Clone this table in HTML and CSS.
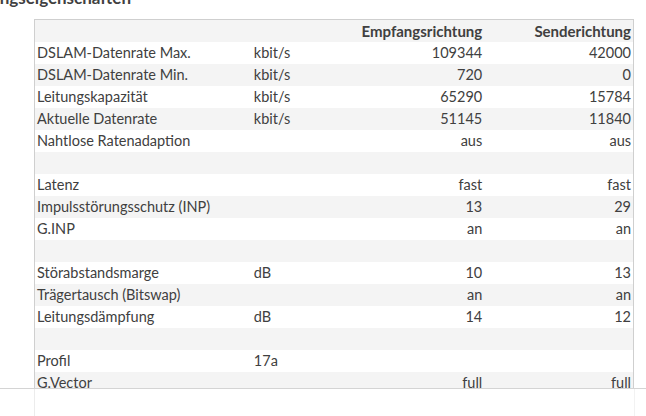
FILE: index.html
```html
<!DOCTYPE html>
<html lang="de">
<head>
<meta charset="utf-8">
<title>Leitungseigenschaften</title>
<link rel="stylesheet" href="styles.css">
</head>
<body>
<div class="viewport">
  <h2 class="title">Leitungseigenschaften</h2>
  <table class="props">
    <colgroup>
      <col class="c-label"><col class="c-unit"><col class="c-rx"><col class="c-tx">
    </colgroup>
    <thead>
      <tr><th></th><th></th><th class="num">Empfangsrichtung</th><th class="num">Senderichtung</th></tr>
    </thead>
    <tbody>
      <tr><td>DSLAM-Datenrate Max.</td><td>kbit/s</td><td class="num">109344</td><td class="num">42000</td></tr>
      <tr><td>DSLAM-Datenrate Min.</td><td>kbit/s</td><td class="num">720</td><td class="num">0</td></tr>
      <tr><td>Leitungskapazität</td><td>kbit/s</td><td class="num">65290</td><td class="num">15784</td></tr>
      <tr><td>Aktuelle Datenrate</td><td>kbit/s</td><td class="num">51145</td><td class="num">11840</td></tr>
      <tr><td>Nahtlose Ratenadaption</td><td></td><td class="num">aus</td><td class="num">aus</td></tr>
      <tr><td></td><td></td><td></td><td></td></tr>
      <tr><td>Latenz</td><td></td><td class="num">fast</td><td class="num">fast</td></tr>
      <tr><td>Impulsstörungsschutz (INP)</td><td></td><td class="num">13</td><td class="num">29</td></tr>
      <tr><td>G.INP</td><td></td><td class="num">an</td><td class="num">an</td></tr>
      <tr><td></td><td></td><td></td><td></td></tr>
      <tr><td>Störabstandsmarge</td><td>dB</td><td class="num">10</td><td class="num">13</td></tr>
      <tr><td>Trägertausch (Bitswap)</td><td></td><td class="num">an</td><td class="num">an</td></tr>
      <tr><td>Leitungsdämpfung</td><td>dB</td><td class="num">14</td><td class="num">12</td></tr>
      <tr><td></td><td></td><td></td><td></td></tr>
      <tr><td>Profil</td><td>17a</td><td></td><td></td></tr>
      <tr><td>G.Vector</td><td></td><td class="num">full</td><td class="num">full</td></tr>
    </tbody>
  </table>
</div>
<div class="footer"><div class="footer-rail"></div></div>
</body>
</html>
```
FILE: styles.css
```css
html, body {
  margin: 0;
  padding: 0;
  background: #fff;
  overflow: hidden;
}
body {
  font-family: Lato, "Open Sans", "Liberation Sans", sans-serif;
  font-size: 14.5px;
  color: #404040;
}
.viewport {
  height: 388px;
  overflow: hidden;
  border-bottom: 1px solid #d4d4d4;
}
.title {
  margin: -13px 0 0 -38px;
  font-size: 17px;
  line-height: 22px;
  font-weight: bold;
  color: #404040;
  white-space: nowrap;
}
.props {
  margin: 10px 0 0 34px;
  width: 600px;
  table-layout: fixed;
  border-collapse: collapse;
  border: 1px solid #cfcfcf;
}
.c-label { width: 217px; }
.c-unit { width: 100px; }
.c-rx { width: 132px; }
.c-tx { width: 149px; }
.props th, .props td {
  height: 22px;
  padding: 0 2px;
  line-height: 22px;
  text-align: left;
  white-space: nowrap;
  vertical-align: middle;
}
.props th { font-weight: bold; font-size: 15px; }
.props .num { text-align: right; }
.props thead tr { background: #f4f4f4; }
.props tbody tr:nth-child(even) { background: #f4f4f4; }
.footer {
  height: 27px;
  padding-left: 34px;
}
.footer-rail {
  width: 599px;
  height: 100%;
  border-left: 1px solid #ececec;
  border-right: 1px solid #f2f2f2;
}
```
